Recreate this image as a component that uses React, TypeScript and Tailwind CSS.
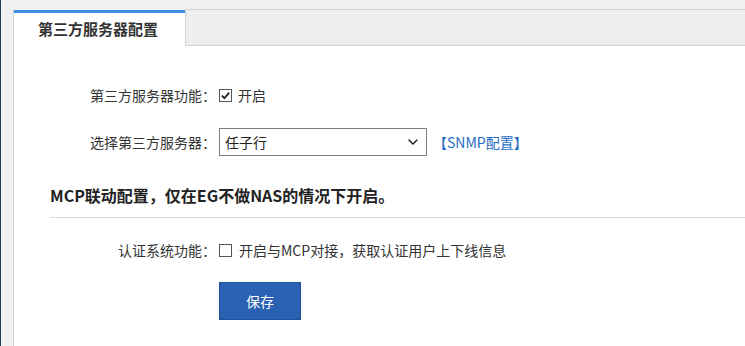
import { ChevronDown } from 'lucide-react'

const FONT = "font-['Microsoft_YaHei','Noto_Sans_CJK_SC','Noto_Sans',sans-serif]"

function Check({ checked }: { checked?: boolean }) {
  return (
    <span className="inline-flex items-center justify-center w-[13px] h-[13px] border border-[#555] bg-white shrink-0">
      {checked && (
        <svg viewBox="0 0 12 12" className="w-[11px] h-[11px]">
          <path d="M2 6.2 L4.8 9 L10 2.8" fill="none" stroke="#222" strokeWidth="2" />
        </svg>
      )}
    </span>
  )
}

function Row({ label, children, className }: { label: string; children: React.ReactNode; className?: string }) {
  return (
    <div className={`flex items-center ${className ?? ''}`}>
      <div className="w-[205px] pr-[3px] text-right text-[14px] text-[#333]">{label}</div>
      <div className="flex items-center">{children}</div>
    </div>
  )
}

export default function App() {
  return (
    <div className={`w-[745px] h-[346px] flex bg-[#f0f0f0] overflow-hidden ${FONT}`}>
      <div className="w-px bg-[#23395a]" />
      <div className="flex-1 pl-3 pt-[9px] flex">
        <div className="flex-1 bg-white border-l border-[#d4d4d4] flex flex-col">
          <div className="flex h-[37px]">
            <div className="w-[171px] mt-px bg-white border-t-[3px] border-[#3a8ee6] flex items-center pl-[24px] text-[15px] font-bold text-[#333]">
              第三方服务器配置
            </div>
            <div className="flex-1 bg-[#eeeeee] border-t border-b border-l border-[#d4d4d4]" />
          </div>

          <Row label="第三方服务器功能：" className="mt-[39px]">
            <Check checked />
            <span className="ml-[6px] text-[14px] text-[#333]">开启</span>
          </Row>

          <Row label="选择第三方服务器：" className="mt-[22px]">
            <div className="w-[208px] h-[28px] border border-[#7d7d7d] flex items-center justify-between pl-[5px] pr-[5px] text-[14px] text-[#222]">
              <span>任子行</span>
              <ChevronDown size={16} strokeWidth={2.2} className="text-[#222]" />
            </div>
            <a className="ml-[6px] text-[14px] text-[#1f6cc4]">【SNMP配置】</a>
          </Row>

          <div className="mt-[27px] ml-[36px] border-b border-[#dcdcdc] pb-[10px] text-[16px] font-bold text-[#222]">
            MCP联动配置，仅在EG不做NAS的情况下开启。
          </div>

          <Row label="认证系统功能：" className="mt-[22px]">
            <Check />
            <span className="ml-[7px] text-[14px] text-[#333]">开启与MCP对接，获取认证用户上下线信息</span>
          </Row>

          <div className="mt-[21px] ml-[205px]">
            <button className="w-[82px] h-[38px] bg-[#2961b3] border border-[#1b5497] text-white text-[14px]">
              保存
            </button>
          </div>
        </div>
      </div>
    </div>
  )
}
